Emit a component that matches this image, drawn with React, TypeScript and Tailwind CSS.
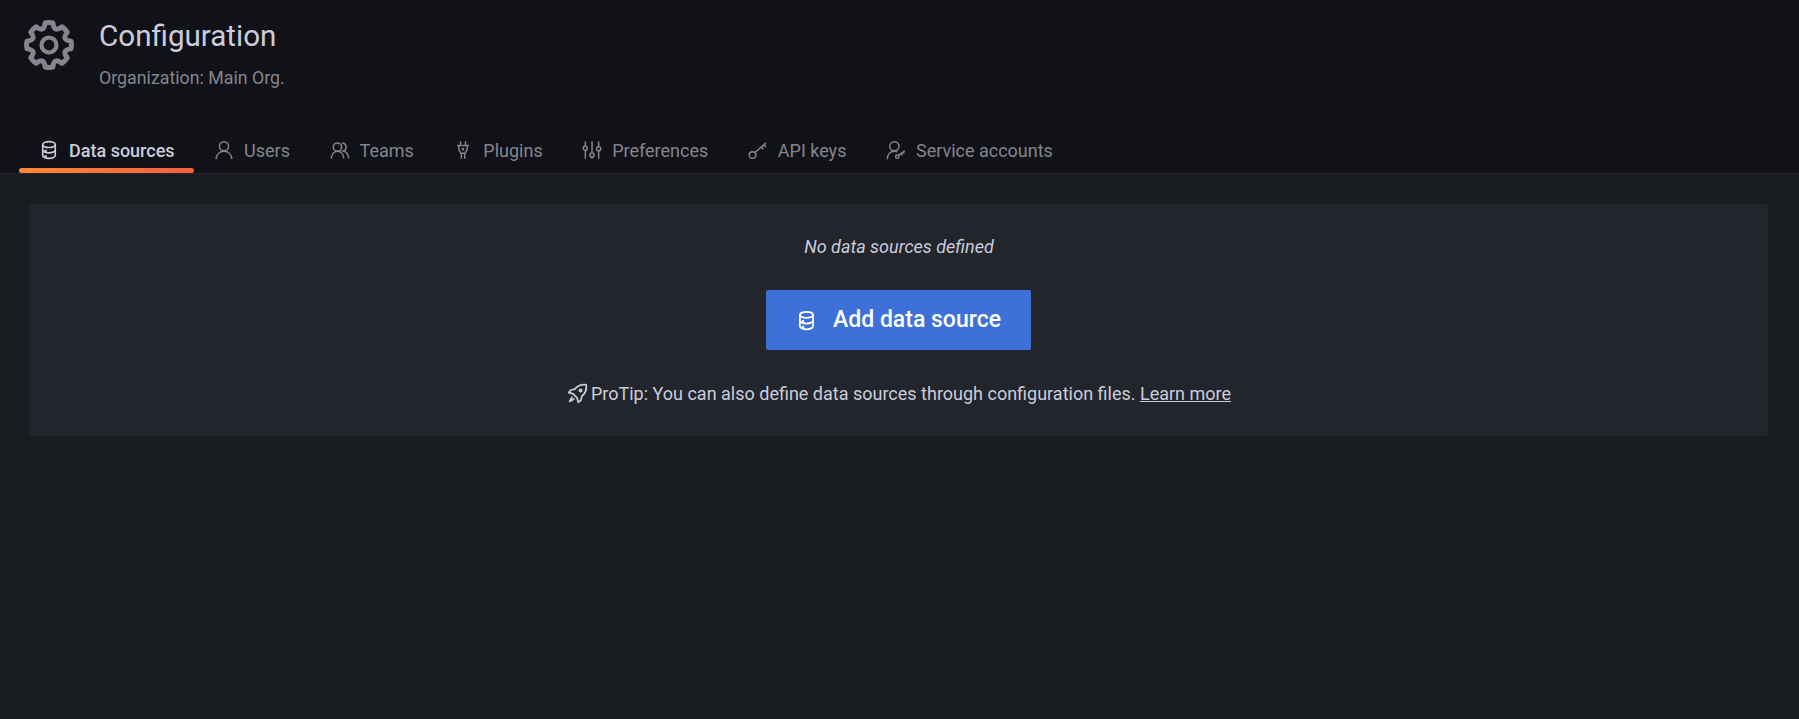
import React from "react";

const Db = ({ className }: { className?: string }) => (
  <svg viewBox="0 0 24 24" fill="none" stroke="currentColor" strokeWidth="2" className={className}>
    <ellipse cx="12" cy="5.5" rx="7.5" ry="3.5" />
    <path d="M4.5 5.500v13c0 1.900 3.400 3.500 7.500 3.500s7.500-1.600 7.500-3.500v-13" />
    <path d="M4.500 12c0 1.900 3.400 3.500 7.500 3.500s7.500-1.600 7.500-3.500" />
    <circle cx="8" cy="13" r="0.6" />
    <circle cx="8" cy="19.500" r="0.6" />
  </svg>
);

const icon = "w-[20px] h-[20px]";

const User = () => (
  <svg viewBox="0 0 24 24" fill="none" stroke="currentColor" strokeWidth="1.800" className={icon}>
    <circle cx="12" cy="7.500" r="5.500" />
    <path d="M2.500 23c.5-5.500 4.200-9.500 9.500-9.500s9 4 9.500 9.500" />
  </svg>
);

const Users = () => (
  <svg viewBox="0 0 24 24" fill="none" stroke="currentColor" strokeWidth="1.800" className={icon}>
    <circle cx="9" cy="8.500" r="5" />
    <path d="M1.500 22c.4-5 3.500-8.500 7.500-8.500s7.100 3.500 7.500 8.500" />
    <path d="M14.500 3.500a5 5 0 0 1 1.500 9.700c3.800.8 6 4 6.500 8.800" />
  </svg>
);

const Plug = () => (
  <svg viewBox="0 0 24 24" fill="none" stroke="currentColor" strokeWidth="1.800" className={icon}>
    <path d="M9 1.500v5M15 1.500v5M5 6.500h14M7 6.500v5l2.500 4.500h5l2.500-4.500v-5M10 16v6.500M14 16v6.500" />
    <circle cx="12" cy="11" r="0.7" />
  </svg>
);

const Sliders = () => (
  <svg viewBox="0 0 24 24" fill="none" stroke="currentColor" strokeWidth="1.800" className={icon}>
    <path d="M4 1.500v6M4 12.500v10M12 1.500v14M12 20.500v2M20 1.500v6.500M20 13v9.500" />
    <circle cx="4" cy="10" r="2.500" />
    <circle cx="12" cy="18" r="2.500" />
    <circle cx="20" cy="10.500" r="2.500" />
  </svg>
);

const Key = () => (
  <svg viewBox="0 0 24 24" fill="none" stroke="currentColor" strokeWidth="1.800" className={icon}>
    <circle cx="5.500" cy="18" r="4" />
    <path d="M8.500 15 21.500 3.500M16 8.500l2.500 2.500M19 6l2.500 2.500" />
  </svg>
);

const ServiceAccount = () => (
  <svg viewBox="0 0 24 24" fill="none" stroke="currentColor" strokeWidth="1.800" className={icon}>
    <circle cx="10" cy="7.500" r="5.500" />
    <path d="M1.500 23c.3-5.500 3.500-9.500 8.500-9.500 1.200 0 2.300.2 3.300.6" />
    <circle cx="13.500" cy="20" r="2" />
    <path d="M15 18.500 22.500 13M18 16.500l1.500 2M20.500 14.500l1.500 2" />
  </svg>
);

// eight rounded teeth, valleys curved in
const gearPath = () => {
  const pt = (deg: number, r: number) => {
    const a = ((deg - 90) * Math.PI) / 180;
    return `${(12 + r * Math.cos(a)).toFixed(2)} ${(12 + r * Math.sin(a)).toFixed(2)}`;
  };
  let d = `M${pt(-10, 10.700)}`;
  for (let i = 0; i < 8; i++) {
    const c = i * 45;
    d += ` Q${pt(c, 11)} ${pt(c + 10, 10.700)} Q${pt(c + 22.500, 6.200)} ${pt(c + 35, 10.700)}`;
  }
  return d + "Z";
};

const Cog = () => (
  <svg viewBox="0 0 24 24" fill="none" stroke="currentColor" strokeWidth="2.400" strokeLinejoin="round" className="w-[50px] h-[50px] text-[#85858f]">
    <path d={gearPath()} />
    <circle cx="12" cy="12" r="3.600" strokeWidth="2" />
  </svg>
);

const Rocket = () => (
  <svg viewBox="0 0 24 24" fill="none" stroke="currentColor" strokeWidth="2" strokeLinejoin="round" className="w-[21px] h-[21px]">
    <path d="M22 2c-5.500-.5-10 1-13 5L4.500 8 2 11l5 1.500 4.500 4.500L13 22l3-2.500 1-4.500c4-3 5.500-7.500 5-13Z" />
    <circle cx="15.500" cy="8.500" r="1.300" />
    <path d="M6 15.500 3 21l5.500-3" />
  </svg>
);

const tabs = [
  { label: "Data sources", icon: <Db className={icon} />, active: true },
  { label: "Users", icon: <User /> },
  { label: "Teams", icon: <Users /> },
  { label: "Plugins", icon: <Plug /> },
  { label: "Preferences", icon: <Sliders /> },
  { label: "API keys", icon: <Key /> },
  { label: "Service accounts", icon: <ServiceAccount /> },
];

export default function App() {
  return (
    <div className="min-h-[719px] bg-[#181b1f] text-[#ccccdc]" style={{ fontFamily: "Roboto, sans-serif" }}>
      {/* Page header */}
      <div className="h-[174px] bg-[#111217] border-b border-[#24262b] flex flex-col justify-between pl-[19px]">
        <div className="flex items-start pt-[20px] pl-[5px]">
          <Cog />
          <div className="ml-[25px] -mt-[2px]">
            <h1 className="text-[29.600px] leading-[36px] text-[#ccccdc]">Configuration</h1>
            <p className="text-[17.800px] leading-[20px] mt-[14px] text-[#85858f]">Organization: Main Org.</p>
          </div>
        </div>
        <div className="flex">
          {tabs.map((t) => (
            <div key={t.label} className={`relative flex items-center gap-[10px] h-[46px] pl-[20px] pr-[19.500px] text-[18px] ${t.active ? "font-medium text-[#ccccdc]" : "text-[#85858f]"}`}>
              {t.icon}
              <span className="mt-[1px]">{t.label}</span>
              {t.active && <div className="absolute left-0 right-0 bottom-0 h-[5px] rounded-[3px] bg-gradient-to-r from-[#ff8833] to-[#f55f3e]" />}
            </div>
          ))}
        </div>
      </div>

      {/* Empty list card */}
      <div className="pl-[30px] pr-[31px] pt-[30px]">
        <div className="h-[232px] bg-[#22252b] rounded-[3px] flex flex-col items-center pt-[33px]">
          <p className="italic text-[18px] leading-[20px]">No data sources defined</p>
          <button className="mt-[33px] mr-[1px] w-[265px] h-[60px] bg-[#3d71d9] rounded-[2px] flex items-center justify-center gap-[16px] text-white font-medium text-[23px]">
            <Db className="w-[21px] h-[21px]" />
            Add data source
          </button>
          <p className="mt-[33px] text-[18px] leading-[20px] flex items-center gap-[3px]">
            <Rocket />
            <span>ProTip: You can also define data sources through configuration files. <a className="underline">Learn more</a></span>
          </p>
        </div>
      </div>
    </div>
  );
}
